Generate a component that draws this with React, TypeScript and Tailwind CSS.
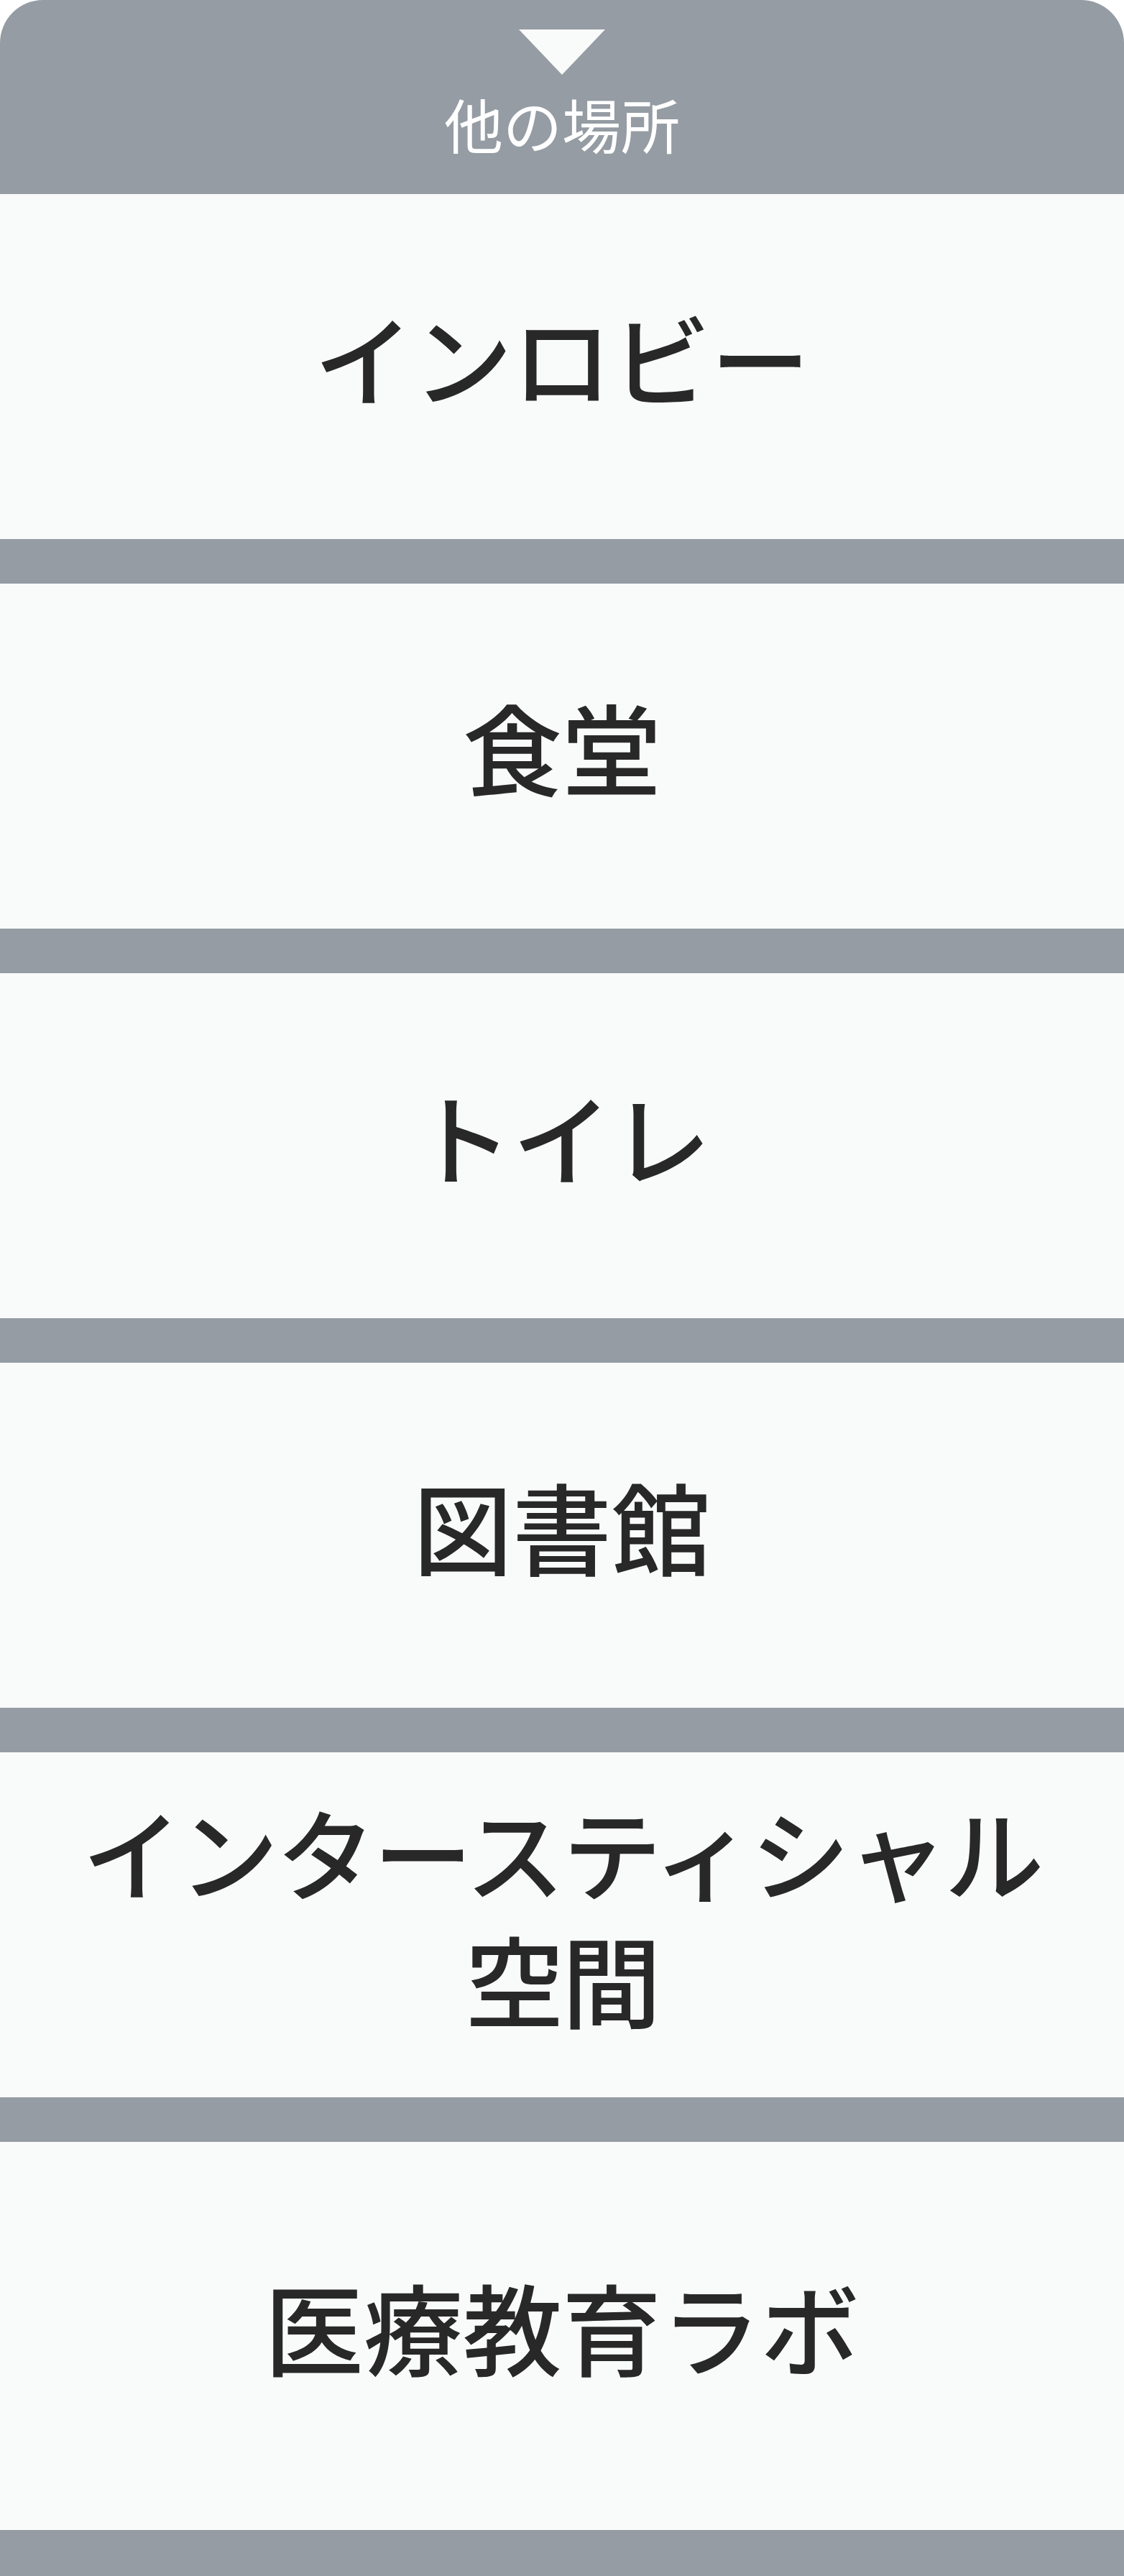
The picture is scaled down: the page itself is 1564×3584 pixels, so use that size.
import React from "react";

const places = ["インロビー", "食堂", "トイレ", "図書館", "インタースティシャル\n空間", "医療教育ラボ"];

const App: React.FC = () => {
  return (
    <div className="w-[1564px] font-['Noto_Sans_CJK_JP','Noto_Sans',sans-serif]">
      <div className="flex h-[270px] flex-col items-center rounded-t-[60px] bg-[#959ca3] pt-[41px]">
        <span className="h-0 w-0 border-x-[60px] border-t-[63px] border-x-transparent border-t-[#f9fafa]" />
        <span className="mt-[19px] text-[82px] leading-[1.2] text-white">他の場所</span>
      </div>
      <div className="flex flex-col gap-[62px] bg-[#959ca3]">
        {places.map((name, i) => (
          <div
            key={name}
            className={
              i === places.length - 1
                ? "flex h-[540px] items-center justify-center bg-[#f9fafa] pb-[30px]"
                : "flex h-[480px] items-center justify-center bg-[#f9fafa] pb-[30px]"
            }
          >
            <p
              className={
                name.length > 6
                  ? "whitespace-pre-line text-center text-[138px] font-medium leading-[1.28] tracking-[-3px] text-[#282828]"
                  : "whitespace-pre-line text-center text-[138px] font-medium leading-[1.28] text-[#282828]"
              }
            >
              {name}
            </p>
          </div>
        ))}
        <div className="h-[2px]" />
      </div>
    </div>
  );
};

export default App;
